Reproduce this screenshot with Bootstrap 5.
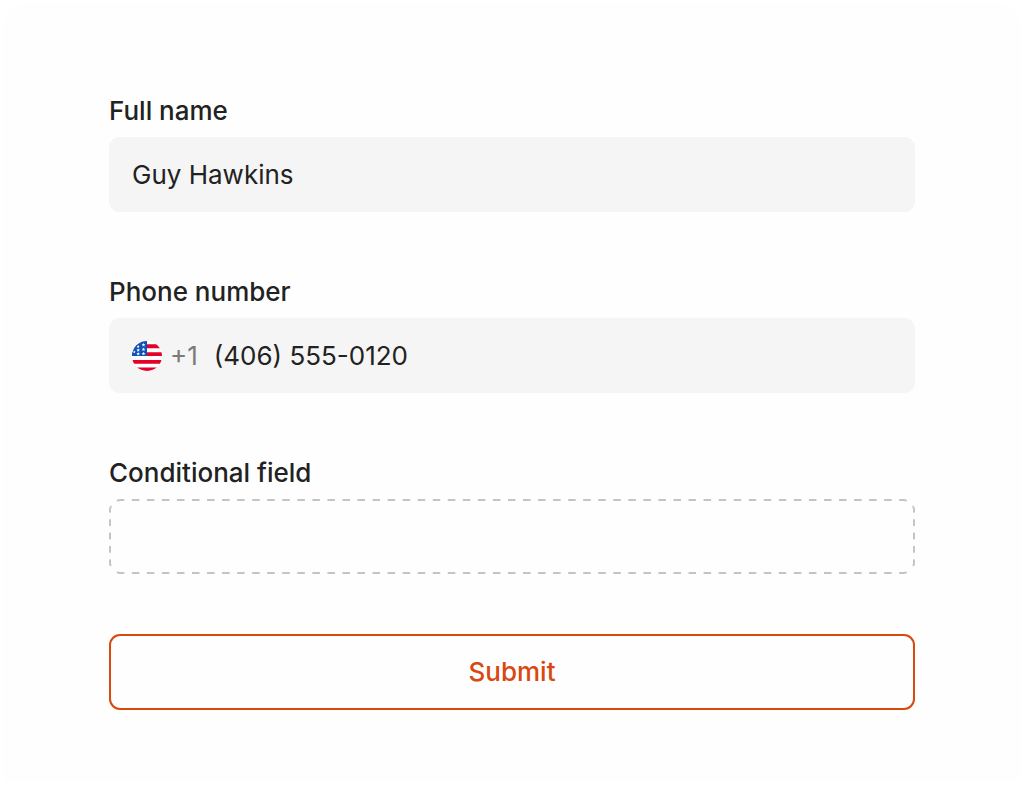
<!DOCTYPE html>
<html lang="en">
<head>
<meta charset="utf-8">
<meta name="viewport" content="width=device-width, initial-scale=1">
<title>Contact form</title>
<link href="https://cdn.jsdelivr.net/npm/bootstrap@5.3.0/dist/css/bootstrap.min.css" rel="stylesheet">
<style>
  body { font-family: Inter, "Liberation Sans", sans-serif; font-size: 26px; line-height: 32px; color: #222; background: #fff; }
  .form-panel { margin: 3px 3px 0; padding: 92px 106px 72px; background: #fefefe; border: 0; border-radius: 24px 24px 0 0; }
  .field { margin-bottom: 64px; }
  .field.last-field { margin-bottom: 60px; }
  .form-label { font-weight: 500; margin-bottom: 10px; display: block; }
  .field-box { height: 75px; border-radius: 11px; background: #f5f5f5; padding: 0 23px; }
  .field-box .form-control { font-size: 26px; line-height: 32px; color: #222; padding: 0; border: 0; border-radius: 0; background: transparent; box-shadow: none; }
  .field-box:focus-within { outline: 2px solid #d9480f; }
  .dial-code { color: #7a7a7a; margin: 0 16px 0 8px; }
  .dashed-box { position: relative; background: transparent; }
  /* Solid rounded border cut into dashes; the tiles stretch so that every side ends on a whole dash */
  .dashed-box::before {
    content: ""; position: absolute; inset: 0; pointer-events: none;
    border: 2px solid #c4c4c4; border-radius: 11px; padding: 2px;
    --dash-x: linear-gradient(90deg, transparent 25%, #000 25% 75%, transparent 75%);
    --dash-y: linear-gradient(180deg, transparent 25%, #000 25% 75%, transparent 75%);
    -webkit-mask-image: var(--dash-x), var(--dash-x), var(--dash-y), var(--dash-y);
    -webkit-mask-origin: content-box;
    -webkit-mask-clip: border-box;
    -webkit-mask-size: 15px 5px, 15px 5px, 5px 13px, 5px 13px;
    -webkit-mask-position: left 0 top -4px, left 0 bottom -4px, left -4px top 0, right -4px top 0;
    -webkit-mask-repeat: round no-repeat, round no-repeat, no-repeat round, no-repeat round;
  }
  .btn-submit { --bs-btn-color: #d9480f; --bs-btn-border-color: #d9480f; --bs-btn-hover-color: #fff; --bs-btn-hover-bg: #d9480f; --bs-btn-hover-border-color: #d9480f; --bs-btn-active-color: #fff; --bs-btn-active-bg: #d9480f;
    --bs-btn-font-size: 26px; --bs-btn-font-weight: 500; --bs-btn-line-height: 32px; --bs-btn-border-width: 2px; --bs-btn-border-radius: 11px; --bs-btn-padding-y: 20px; }
  @media (max-width: 700px) { .form-panel { padding-left: 24px; padding-right: 24px; } }
</style>
</head>
<body>
<main>
  <form class="form-panel">
    <div class="field">
      <label class="form-label" for="fullName">Full name</label>
      <div class="field-box d-flex align-items-center">
        <input class="form-control" type="text" id="fullName" value="Guy Hawkins">
      </div>
    </div>
    <div class="field">
      <label class="form-label" for="phone">Phone number</label>
      <div class="field-box d-flex align-items-center">
        <svg class="flex-shrink-0" width="30" height="30" viewBox="0 0 30 30" role="img" aria-label="United States">
          <defs><clipPath id="round"><circle cx="15" cy="15" r="15"/></clipPath></defs>
          <g clip-path="url(#round)">
            <path fill="#fff" d="M0 0h30v30H0z"/>
            <path fill="#e4002b" d="M0 3.3h30v4H0zM0 11.2h30v3.9H0zM0 19h30v3.8H0zM0 26.5h30V30H0z"/>
            <path fill="#0f52ba" d="M0 0h15v15H0z"/>
            <path fill="#fff" d="M11.5 1.9l.5 1.2 1.3.1-1 .9.3 1.3-1.1-.7-1.1.7.3-1.3-1-.9 1.3-.1zM6.2 4l.4 1 1.1.1-.8.7.2 1.1-.9-.6-1 .6.3-1.1-.9-.7 1.1-.1zM11.5 6.5l.5 1.2 1.3.1-1 .9.3 1.3-1.1-.7-1.1.7.3-1.3-1-.9 1.3-.1zM6.2 7.3l.5 1.2 1.3.1-1 .9.3 1.3-1.1-.7-1.1.7.3-1.3-1-.9 1.3-.1zM11.5 10.8l.5 1.2 1.3.1-1 .9.3 1.3-1.1-.7-1.1.7.3-1.3-1-.9 1.3-.1zM6.2 11l.5 1.2 1.3.1-1 .9.3 1.3-1.1-.7-1.1.7.3-1.3-1-.9 1.3-.1zM2.3 9.5l.4 1 1 .1-.8.7.2 1-.8-.5-.9.5.3-1-.8-.7 1-.1z"/>
          </g>
        </svg>
        <span class="dial-code">+1</span>
        <input class="form-control" type="tel" id="phone" value="(406) 555-0120">
      </div>
    </div>
    <div class="field last-field">
      <label class="form-label" for="conditional">Conditional field</label>
      <div class="field-box dashed-box d-flex align-items-center">
        <input class="form-control" type="text" id="conditional">
      </div>
    </div>
    <button class="btn btn-submit w-100" type="submit">Submit</button>
  </form>
</main>
<script src="https://cdn.jsdelivr.net/npm/bootstrap@5.3.0/dist/js/bootstrap.bundle.min.js"></script>
</body>
</html>
